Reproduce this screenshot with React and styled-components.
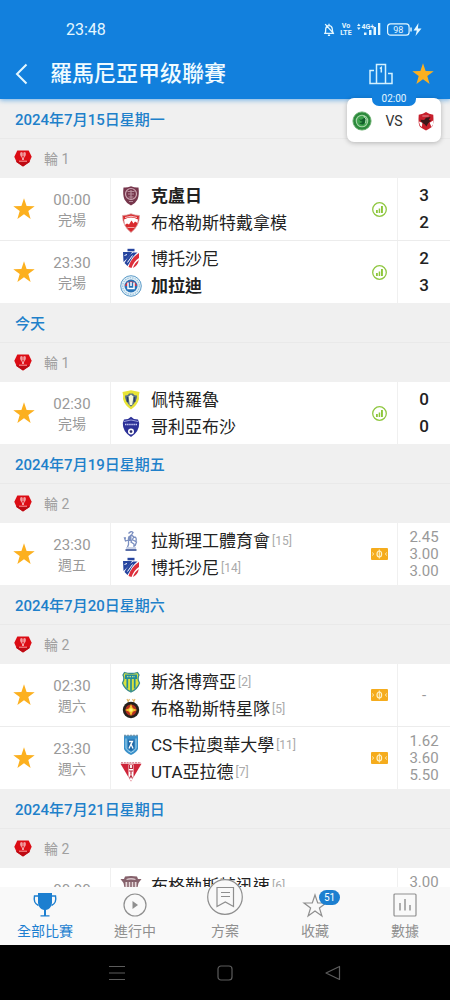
import React, { useState } from "react";
import styled, { createGlobalStyle, css } from "styled-components";

const blue = "#1280dd";
const amber = "#fcb01f";

const GlobalStyle = createGlobalStyle`
  * { box-sizing: border-box; }
  body {
    margin: 0;
    background: #f0f0f0;
    font-family: Roboto, "Noto Sans CJK TC", sans-serif;
    color: #222;
  }
  button { font: inherit; color: inherit; background: none; border: 0; padding: 0; cursor: pointer; }
  h1, h2, ul { margin: 0; padding: 0; }
  ul { list-style: none; }
  svg { display: block; flex: none; overflow: visible; }
`;

const Screen = styled.div`
  display: flex;
  flex-direction: column;
  height: 100vh;
`;

/* ---------- header ---------- */
const Header = styled.header`
  position: relative;
  z-index: 2;
  flex: none;
  background: ${blue};
  color: #fff;
  box-shadow: 0 1px 5px rgba(18, 128, 221, 0.6);
`;

const StatusBar = styled.div`
  display: flex;
  align-items: center;
  justify-content: space-between;
  height: 48px;
  padding: 10px 28px 0 66px;
  font-size: 16px;
  color: #e4f7ff;
`;

const StatusIcons = styled.div`
  display: flex;
  align-items: center;
  gap: 6px;
`;

const TitleBar = styled.div`
  display: flex;
  align-items: center;
  height: 51px;
  padding: 0 17px 0 12px;
`;

const IconButton = styled.button`
  display: flex;
  align-items: center;
  justify-content: center;
  width: ${(p) => p.$size || 20}px;
  height: ${(p) => p.$size || 20}px;
`;

const Title = styled.h1`
  flex: 1;
  padding-left: 18px;
  font-size: 22px;
  line-height: 30px;
  font-weight: 500;
  color: #f0fbff;
`;

const TitleActions = styled.div`
  display: flex;
  align-items: center;
  gap: 20px;
`;

const LiveCard = styled.button`
  position: absolute;
  top: 98px;
  right: 9px;
  display: flex;
  align-items: center;
  justify-content: space-between;
  width: 94px;
  height: 44px;
  padding: 2px 5px 0;
  border-radius: 7px;
  background: #fff;
  color: #333;
  font-size: 14px;
  box-shadow: 0 1px 5px rgba(0, 0, 0, 0.25);
`;

const LiveTime = styled.span`
  position: absolute;
  top: -6px;
  left: 25px;
  width: 44px;
  height: 14px;
  border-radius: 0 0 7px 7px;
  background: ${blue};
  color: #e4f7ff;
  font-size: 10px;
  line-height: 14px;
  text-align: center;
`;

/* ---------- match list ---------- */
const List = styled.main`
  flex: 1;
  min-height: 0;
  overflow-y: auto;
  scrollbar-width: none;
`;

const DateHeading = styled.h2`
  height: 40px;
  padding-left: 15px;
  border-bottom: 1px solid #e9e9e9;
  font-size: 15px;
  line-height: 42px;
  font-weight: 500;
  color: #2080ca;
`;

const RoundBar = styled.div`
  display: flex;
  align-items: center;
  gap: 12px;
  height: 39px;
  padding: 0 0 2px 14px;
  font-size: 14px;
  color: #a0a0a0;
`;

const MatchRow = styled.li`
  display: flex;
  align-items: center;
  background: #fff;
  padding-left: 14px;

  & + & { border-top: 1px solid #ececec; }
`;

const Kickoff = styled.div`
  width: 76px;
  padding-top: 1px;
  text-align: center;
  font-size: 15px;
  line-height: 20px;
  color: #999;
`;

const KickoffNote = styled.div`
  min-height: 20px;
  font-size: 14px;
`;

const Teams = styled.div`
  flex: 1;
  min-width: 0;
  height: 62px;
  padding: 4px 0 4px 9px;
  border-left: 1px solid #f0f0f0;
`;

const Team = styled.div`
  display: flex;
  align-items: center;
  height: 27px;
  font-size: 17px;
  white-space: nowrap;
  font-weight: ${(p) => (p.$winner ? 700 : 400)};
`;

const TeamName = styled.span`
  padding: 1px 0 0 9px;
  line-height: 27px;
`;

const Rank = styled.span`
  padding-left: 2px;
  font-size: 12px;
  color: #aaa;
`;

const RowBadge = styled.div`
  display: flex;
  justify-content: center;
  width: 36px;
`;

const Result = styled.div`
  display: flex;
  flex-direction: column;
  justify-content: center;
  width: 53px;
  height: 62px;
  border-left: 1px solid #f0f0f0;
  text-align: center;
  ${(p) =>
    p.$final
      ? css`font-size: 17px; line-height: 27px; font-weight: 500;`
      : css`font-size: 15px; line-height: 17px; color: #999;`}

  span { min-height: 17px; }
`;

/* ---------- bottom bars ---------- */
const Nav = styled.nav`
  position: relative;
  z-index: 1;
  flex: none;
  display: flex;
  height: 58px;
  background: #f9f9f9;
`;

const NavItem = styled.button`
  flex: 1;
  display: flex;
  flex-direction: column;
  align-items: center;
  justify-content: flex-end;
  gap: ${(p) => (p.$raised ? 6 : 4)}px;
  padding-bottom: 4px;
  font-size: 14px;
  line-height: 20px;
  color: ${(p) => (p.$active ? "#1c7fd0" : "#8f8f8f")};
`;

const NavIcon = styled.span`
  position: relative;
  display: flex;
  border-radius: 50%;
  background: #f9f9f9;
`;

const Count = styled.span`
  position: absolute;
  top: -3px;
  left: 16px;
  width: 21px;
  height: 15px;
  border-radius: 8px;
  background: #1c7fd0;
  color: #fff;
  font-size: 10px;
  line-height: 15px;
`;

const SystemBar = styled.footer`
  flex: none;
  display: flex;
  align-items: center;
  justify-content: center;
  gap: 90px;
  height: 55px;
  background: #000;
  color: #5c5c5c;
`;

/* ---------- icons ---------- */
const Star = ({ size = 22 }) => (
  <svg width={size} height={size} viewBox="0 0 22 22" fill={amber}>
    <path d="M11 .3 13.6 8.1 21.7 8.3 15.3 13.1 17.6 21 11 16.3 4.4 21 6.7 13.1 .3 8.3 8.4 8.1Z" />
  </svg>
);

const Back = () => (
  <svg width="20" height="22" viewBox="0 0 20 22" fill="none" stroke="#e4f7ff" strokeWidth="2">
    <path d="M14.500 1.500 5 11l9.500 9.500" />
  </svg>
);

const Podium = () => (
  <svg width="24" height="22" viewBox="0 0 24 22" fill="none" stroke="#d4f1ff" strokeWidth="1.500">
    <path d="M7.500 20.500V1.500h9v19M5 7.500H1V20.500h22V10.500h-4M10.800 5.500 12.300 4.500V9.500" />
  </svg>
);

const BellOff = () => (
  <svg width="12" height="13" viewBox="0 0 11 12" fill="none" stroke="#e4f7ff" strokeWidth="1.200">
    <path d="M1 9.500h9M2 9.500C2.600 8 2.300 6.500 2.500 5.200 2.800 3.400 4 2.500 5.500 2.500S8.300 3.500 8.500 5.200c.2 1.500 0 2.800 1 4.300M5.500.8v1.700M4.500 11.300h2M2 1l8 9" />
  </svg>
);

const VoLte = () => (
  <svg width="10" height="14" viewBox="0 0 10 14" fill="#e4f7ff" fontFamily="Roboto" fontWeight="700" textAnchor="middle">
    <text x="5" y="6" fontSize="7">Vo</text>
    <text x="5" y="13" fontSize="7">LTE</text>
  </svg>
);

const Signal = () => (
  <svg width="24" height="14" viewBox="0 0 24 14" fill="#e4f7ff">
    <path d="M0 4 1.800 1.500 3.600 4ZM0 5.500h3.600L1.800 8Z" />
    <text x="4.500" y="6.500" fontSize="7" fontFamily="Roboto" fontWeight="700">4G+</text>
    <path d="M7 10.500h2.500V13H7ZM12 8h2.500v5H12ZM16.500 5H19v8h-2.500ZM21 1h2.300v12H21Z" />
  </svg>
);

const Battery = () => (
  <svg width="35" height="13" viewBox="0 0 35 13" fill="none" stroke="#e4f7ff">
    <rect x=".6" y=".9" width="21.500" height="11.300" rx="3" strokeWidth="1.200" />
    <path d="M24 4.500v4" strokeWidth="1.500" />
    <text x="11.300" y="10" fontSize="9" fontFamily="Roboto" textAnchor="middle" fill="#e4f7ff" stroke="none">98</text>
    <path d="M31.500 0 26.500 7.500h3.300L28.500 13l6-7.500h-3.600Z" fill="#e4f7ff" stroke="none" />
  </svg>
);

const LeagueLogo = () => (
  <svg width="18" height="18" viewBox="0 0 18 18">
    <path d="M3.300 1.500H14.700L17.700 7.800 15.300 13.200 9 17.400 2.700 13.200 .3 7.800Z" fill="#dc0d15" />
    <path d="M2.200 12 2.700 13.200 9 17.400 15.300 13.200 15.800 12Z" fill="#bd0b14" />
    <path d="M6.600 3.600C6.100 6 6.800 8.600 8.400 9.300V11h1.200V9.300C11.200 8.600 11.900 6 11.400 3.600L10.400 3v5.200L9 8.800 7.600 8.200V3Z" fill="#fff" />
    <path d="M9 3.500v4" stroke="#ffdcdc" />
    <path d="M5 12.200h8" stroke="#ff9c9c" />
  </svg>
);

const StatsBadge = () => (
  <svg width="15" height="15" viewBox="0 0 15 15">
    <circle cx="7.500" cy="7.500" r="6.800" fill="none" stroke="#8fc740" strokeWidth="1.300" />
    <path d="M4 8h1.800v3H4ZM6.700 6.500h1.500V11H6.700ZM9 4h1.900v7H9Z" fill="#8cc63a" />
  </svg>
);

const PitchBadge = () => (
  <svg width="17" height="12" viewBox="0 0 17 12">
    <rect width="17" height="12" rx="1" fill="#f5ac1d" />
    <g fill="none" stroke="#fff3c9">
      <ellipse cx="8.300" cy="6" rx="2.300" ry="3" strokeWidth="1.200" />
      <path d="M8.300 1.500v9M1.500 4.500c1 .5 1 2.500 0 3M15.500 4.500c-1 .5-1 2.500 0 3" />
    </g>
  </svg>
);

const shield = "M3.500 2.500Q7 3 11 1.200Q15 3 18.500 2.500Q19.500 10 17.500 14.500Q15.500 18.500 11 20.500Q6.500 18.500 4.500 14.500Q2.500 10 3.500 2.500Z";

const crests = {
  cluj: (
    <>
      <path d={shield} fill="#76364c" />
      <circle cx="11" cy="9" r="5.500" fill="none" stroke="#cfa9b5" strokeWidth="1.200" />
      <path d="M7.500 6.500h7M8 9h6M11 5v9M8.500 12h5M9 16.500h4" stroke="#b58b9a" strokeWidth="1.200" />
    </>
  ),
  dinamo: (
    <>
      <path d="M2.500 3.500Q7 3.500 11 1.800 15 3.500 19.500 3.500 19.500 14 11 20.500 2.500 14 2.500 3.500Z" fill="#d9292d" stroke="#d8a5a5" strokeWidth=".8" />
      <path d="M4 7.500Q11 3.500 18 7.500L17.500 11 15 9.500 13.500 11.500 11.500 8.500 9 12.500 7 11.500 4.800 13Z" fill="#fff" />
      <path d="M5 5.500Q11 3 17 5.500" stroke="#f6caca" fill="none" />
      <path d="M7.500 15.500h7" stroke="#f1a1a1" />
    </>
  ),
  botosani: (
    <>
      <path d="M3.500 3.500 11 2 18.500 3.500V12Q17 18 11 21 5 18 3.500 12Z" fill="#fff" />
      <path d="M7.500 .8h7v2.500h-7Z" fill="#27459f" />
      <path d="M3 4h9q-1 3-3.500 5L3.500 14Z" fill="#27459f" />
      <path d="M13 4.500h4.500Q12 9 10.500 13L7.500 18 4.500 15Q7 9 13 4.500Z" fill="#27459f" />
      <path d="M19 5v5Q14 13 11.500 20L8.500 19Q11 10 19 5ZM18.800 12Q18 17.500 13 20 14.500 15 18.800 12Z" fill="#dc2f3b" />
      <path d="M4.500 7.500 7 6.500M7.500 14.500 12.500 7.500" stroke="#fff" />
    </>
  ),
  galati: (
    <>
      <circle cx="11" cy="11" r="10.300" fill="#e4f0f7" stroke="#5d9cc9" />
      <circle cx="11" cy="11" r="8.300" fill="none" stroke="#9cc6e0" strokeDasharray="1.500 1" strokeWidth="1.300" />
      <circle cx="11" cy="11" r="6.500" fill="#2872b6" />
      <path d="M5 11A6.300 6.300 0 0 1 17 11L14 11V7.500H8V11Z" fill="#dc3343" />
      <path d="M8 7.500v6h6v-6M11 7v4" stroke="#fff" strokeWidth="1.500" fill="none" />
    </>
  ),
  petrolul: (
    <>
      <path d="M2.500 3 11 1.200 19.500 3Q18.500 6.500 19 10 17.500 16 11 20.500 4.500 16 3 10 3.500 6.500 2.500 3Z" fill="#e8e436" />
      <path d="M5 6.500Q8 7 9 4.500h4q1 2.500 4 2Q17.500 12 11 17.800 4.500 12 5 6.500Z" fill="#587184" />
      <path d="M8.500 7.500 11 5.500l2.500 2-1.300 8.500H9.800Z" fill="#f5f7d8" />
      <path d="M7.500 8v5M14.500 8v5" stroke="#273e68" strokeWidth="1.500" />
    </>
  ),
  farul: (
    <>
      <path d="M2.800 7 4 3.500 8 3l3-2.200L14 3l4 .5L19.200 7Q19.500 15.500 11 21 2.500 15.500 2.800 7Z" fill="#2c3198" />
      <path d="M4 5.500Q11 2.500 18 5.500" stroke="#9ea1dc" fill="none" />
      <path d="M5 8.500h12" stroke="#c9ccf5" strokeWidth="1.700" strokeDasharray="1.500 .6" />
      <circle cx="11" cy="15.500" r="3" fill="#fff" />
      <path d="m11 14 1.500 1-.5 1.700h-2L9.500 15Z" fill="#292b66" />
    </>
  ),
  iasi: (
    <g fill="none" stroke="#7b8fc0" strokeWidth="1.300">
      <path d="M8.500 3.500Q11 .5 13 2.500L11.500 5 14 7Q17 7 16 11M13.500 7.500 11 12l3 2v3M11 5 8.500 8v6.500l-1 2.500M6 8H4.500l1 3 3-1M13 10l3.500 2-1.500 4" />
      <path d="M10 6v5" strokeWidth="3" />
      <path d="M5.500 20h11" stroke="#5c70a9" strokeWidth="2" />
      <path d="M6 18h10" strokeWidth=".8" />
    </g>
  ),
  slobozia: (
    <>
      <path d="M3 4 4.500 1.500Q11 3.500 17.500 1.500L19 4Q17 8 19.500 12 17.500 18 11 21 4.500 18 2.500 12 5 8 3 4Z" fill="#d9e23c" stroke="#378b8e" strokeWidth="1.300" />
      <path d="M5 3.500h12V8H5Z" fill="#258c99" />
      <path d="M7.300 8v9.500M11 7v13M14.700 8v9.500" stroke="#258c99" strokeWidth="1.700" />
      <path d="M7 5.700h8" stroke="#b8dc90" strokeWidth="1.300" strokeDasharray="1.500 1" />
    </>
  ),
  fcsb: (
    <>
      <path d="m7 1 1.200 2.500L9.500 1M12.500 1l1.300 2.500L15 1" stroke="#e3b868" strokeWidth="1.200" fill="none" />
      <circle cx="11" cy="12" r="8.200" fill="#25201c" />
      <circle cx="11" cy="12" r="5.500" fill="#b5301f" />
      <path d="m11 6 1.800 4.200L17 12l-4.200 1.800L11 18 9.200 13.800 5 12l4.200-1.800Z" fill="#f5c62c" />
      <circle cx="11" cy="12" r="1.800" fill="#fff17d" />
      <path d="M11 4v2M11 18v2M3.500 12h1.500M17 12h1.500" stroke="#25201c" strokeWidth="1.300" />
    </>
  ),
  craiova: (
    <>
      <path d="M4 1.500h14V15Q16.500 18.500 11 21 5.500 18.500 4 15Z" fill="#3990ca" />
      <path d="M4 1.500h14" stroke="#7898ac" strokeDasharray="2 1" strokeWidth="1.500" />
      <path d="M6 4.500v9.700Q7.500 17 11 18.500q3.500-1.500 5-4.300V4.500" fill="none" stroke="#a9d6ef" />
      <path d="M8 5.500h6.500v9L11 17l-3-2.500Z" fill="#2269a7" />
      <path d="M9 14.500 11 10l2 4.500M9 7.500h3.500L11 10.500" stroke="#fff" fill="none" strokeWidth="1.300" />
    </>
  ),
  uta: (
    <>
      <path d="M.5 2.800h21L11 20.500Z" fill="#ce2439" />
      <path d="M1 1.800h20" stroke="#d88d98" strokeWidth="1.500" strokeDasharray="2 .8" />
      <path d="M8.500 3.500h5v14L11 20 8.500 17Z" fill="#fff" />
      <path d="M9.500 4v3.500h3V4M9 10h4M11 10v3.500M9.500 17.500 11 14.500l1.500 3" stroke="#b72e40" strokeWidth="1.200" fill="none" />
    </>
  ),
  rapid: (
    <>
      <path d="M5 1.500Q11 .5 17 1.500l1 2.500h3.500l-3 4-2 9-5.500 3-5.500-3-2-9-3-4H4Z" fill="#85616b" />
      <path d="M5.500 7h11v7h-11Z" fill="#e6d8da" />
      <path d="M8 7v6M11 7v6M14 7v6" stroke="#85616b" strokeWidth="1.500" />
      <path d="M6.500 4.500Q11 3 15.500 4.500" stroke="#d8c4ca" strokeWidth="1.300" fill="none" />
    </>
  ),
  green: (
    <>
      <circle cx="11" cy="11" r="10" fill="#2c8a3c" stroke="#67ad6c" />
      <circle cx="11" cy="11" r="6.300" fill="#3fa34d" stroke="#a5d5a8" strokeWidth="1.200" />
      <path d="M7.500 8.500Q10 11 12 8.500L15 7Q15.500 12 13 14.500 9.500 15.500 7.500 13 11 13.500 11.500 11.500 9 12 7.500 8.500Z" fill="#125f2b" />
      <path d="M13 5.500q4 3 2 8" stroke="#d4efd5" fill="none" />
    </>
  ),
  red: (
    <>
      <path d="M3 4Q8 3.500 11 1q3 2.500 8 3 1 11-2 14-3 2-6 3.500-3-1.500-6-3.500-3-3-2-14Z" fill="#c71f2c" />
      <path d="M5 9.500 9 10 11 7.500 16 6.500 14 10l2.500 .5-3.500 3.500-1.500 3-2-2.500L8.500 14 6 12.500Z" fill="#3a1719" />
      <path d="M3.200 11.500 7 13 6.500 17.500 4.500 16ZM15 13l3.800-2.500v4l-1.800 3Z" fill="#fff" />
      <path d="M7 5.500h7" stroke="#e9a0a5" />
    </>
  ),
};

const Crest = ({ id, size = 20 }) => (
  <svg width={size} height={size} viewBox="0 0 22 22">{crests[id]}</svg>
);

const line = { fill: "none", stroke: "currentColor", strokeWidth: 1.2 };

const navIcons = {
  trophy: (
    <svg width="24" height="24" viewBox="0 0 24 24" fill="currentColor">
      <path d="M5 0h14v10q-1 6-6 7v5.200h3.500v1.300h-9v-1.300H11V17Q6 16 5 10Z" />
      <path d="M5 3H1.500Q0 10 5.500 12.500M19 3h3.500Q24 10 18.500 12.500" fill="none" stroke="currentColor" strokeWidth="1.400" />
    </svg>
  ),
  play: (
    <svg width="24" height="24" viewBox="0 0 24 24" {...line}>
      <circle cx="12" cy="12" r="11" />
      <path d="M9.500 8v8l5.500-4Z" fill="currentColor" stroke="none" />
    </svg>
  ),
  plan: (
    <svg width="36" height="36" viewBox="0 0 36 36" {...line}>
      <circle cx="18" cy="18" r="17.300" />
      <path d="M10 8.500h16.500v19L18.300 23 10 27.500ZM14 13.500h9M14 17.500h9" />
    </svg>
  ),
  star: (
    <svg width="24" height="24" viewBox="0 0 24 24" {...line}>
      <path d="m12 2 2.700 8H23l-6.600 5 2.500 8-6.900-5-6.900 5 2.500-8L1 10h8.300Z" />
    </svg>
  ),
  data: (
    <svg width="24" height="24" viewBox="0 0 24 24" {...line}>
      <rect x="1" y="1" width="22" height="22" rx="1" />
      <path d="M7 10v7.500M12 6v11.500M17 12v5.500" strokeWidth="1.400" />
    </svg>
  ),
};

/* ---------- data ---------- */
const sections = [
  {
    date: "2024年7月15日星期一",
    round: "輪 1",
    matches: [
      { time: "00:00", note: "完場", final: true, result: ["3", "2"], teams: [{ id: "cluj", name: "克盧日", winner: true }, { id: "dinamo", name: "布格勒斯特戴拿模" }] },
      { time: "23:30", note: "完場", final: true, result: ["2", "3"], teams: [{ id: "botosani", name: "博托沙尼" }, { id: "galati", name: "加拉迪", winner: true }] },
    ],
  },
  {
    date: "今天",
    round: "輪 1",
    matches: [
      { time: "02:30", note: "完場", final: true, result: ["0", "0"], teams: [{ id: "petrolul", name: "佩特羅魯" }, { id: "farul", name: "哥利亞布沙" }] },
    ],
  },
  {
    date: "2024年7月19日星期五",
    round: "輪 2",
    matches: [
      { time: "23:30", note: "週五", result: ["2.45", "3.00", "3.00"], teams: [{ id: "iasi", name: "拉斯理工體育會", rank: 15 }, { id: "botosani", name: "博托沙尼", rank: 14 }] },
    ],
  },
  {
    date: "2024年7月20日星期六",
    round: "輪 2",
    matches: [
      { time: "02:30", note: "週六", result: ["-"], teams: [{ id: "slobozia", name: "斯洛博齊亞", rank: 2 }, { id: "fcsb", name: "布格勒斯特星隊", rank: 5 }] },
      { time: "23:30", note: "週六", result: ["1.62", "3.60", "5.50"], teams: [{ id: "craiova", name: "CS卡拉奧華大學", rank: 11 }, { id: "uta", name: "UTA亞拉德", rank: 7 }] },
    ],
  },
  {
    date: "2024年7月21日星期日",
    round: "輪 2",
    matches: [
      { time: "00:00", note: "", result: ["3.00", "", ""], teams: [{ id: "rapid", name: "布格勒斯特迅速", rank: 6 }] },
    ],
  },
];

const navItems = [
  { icon: "trophy", label: "全部比賽" },
  { icon: "play", label: "進行中" },
  { icon: "plan", label: "方案", raised: true },
  { icon: "star", label: "收藏", count: 51 },
  { icon: "data", label: "數據" },
];

function Match({ match }) {
  return (
    <MatchRow>
      <IconButton aria-label="收藏"><Star /></IconButton>
      <Kickoff>
        {match.time}
        <KickoffNote>{match.note}</KickoffNote>
      </Kickoff>
      <Teams>
        {match.teams.map((t) => (
          <Team key={t.name} $winner={t.winner}>
            <Crest id={t.id} size={22} />
            <TeamName>{t.name}</TeamName>
            {t.rank && <Rank>[{t.rank}]</Rank>}
          </Team>
        ))}
      </Teams>
      <RowBadge>{match.final ? <StatsBadge /> : <PitchBadge />}</RowBadge>
      <Result $final={match.final}>
        {match.result.map((r, i) => <span key={i}>{r}</span>)}
      </Result>
    </MatchRow>
  );
}

export default function App() {
  const [active, setActive] = useState(0);
  return (
    <Screen>
      <GlobalStyle />
      <Header>
        <StatusBar>
          <span>23:48</span>
          <StatusIcons><BellOff /><VoLte /><Signal /><Battery /></StatusIcons>
        </StatusBar>
        <TitleBar>
          <IconButton aria-label="返回"><Back /></IconButton>
          <Title>羅馬尼亞甲级聯賽</Title>
          <TitleActions>
            <IconButton $size={24} aria-label="排名"><Podium /></IconButton>
            <IconButton aria-label="收藏"><Star /></IconButton>
          </TitleActions>
        </TitleBar>
        <LiveCard>
          <LiveTime>02:00</LiveTime>
          <Crest id="green" />
          VS
          <Crest id="red" />
        </LiveCard>
      </Header>
      <List>
        {sections.map((s) => (
          <section key={s.date}>
            <DateHeading>{s.date}</DateHeading>
            <RoundBar><LeagueLogo />{s.round}</RoundBar>
            <ul>{s.matches.map((m) => <Match key={m.time} match={m} />)}</ul>
          </section>
        ))}
      </List>
      <Nav>
        {navItems.map((n, i) => (
          <NavItem key={n.label} $active={i === active} $raised={n.raised} onClick={() => setActive(i)}>
            <NavIcon>
              {navIcons[n.icon]}
              {n.count && <Count>{n.count}</Count>}
            </NavIcon>
            {n.label}
          </NavItem>
        ))}
      </Nav>
      <SystemBar>
        <IconButton $size={18} aria-label="選單">
          <svg width="16" height="16" viewBox="0 0 16 16" {...line}><path d="M0 1.500h16M0 8h16M0 14.500h16" /></svg>
        </IconButton>
        <IconButton $size={18} aria-label="主畫面">
          <svg width="16" height="16" viewBox="0 0 16 16" {...line}><rect x="1" y="1" width="14" height="14" rx="3" /></svg>
        </IconButton>
        <IconButton $size={18} aria-label="上一頁">
          <svg width="16" height="16" viewBox="0 0 16 16" {...line}><path d="M14.500 1.500v13L1 8Z" strokeLinejoin="round" /></svg>
        </IconButton>
      </SystemBar>
    </Screen>
  );
}
